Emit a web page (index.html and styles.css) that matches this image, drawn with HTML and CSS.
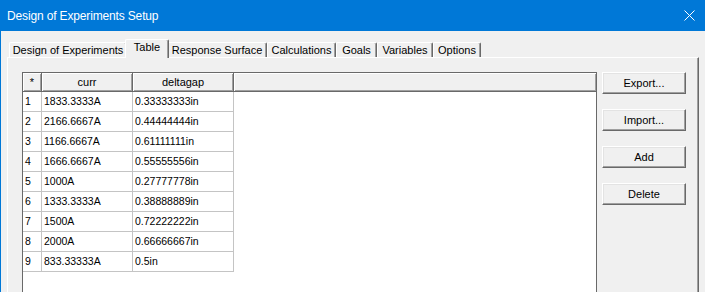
FILE: index.html
```html
<!DOCTYPE html>
<html lang="en">
<head>
    <meta charset="UTF-8">
    <link rel="stylesheet" href="styles.css">
    <title>Design of Experiments Setup</title>
</head>
<body>
    <div class="window">
        <div class="titlebar">
            <span class="title">Design of Experiments Setup</span>
            <svg class="close" width="11" height="11" viewBox="0 0 11 11">
                <path d="M0.5 0.5 L10.5 10.5 M10.5 0.5 L0.5 10.5" stroke="#fff" stroke-width="1" fill="none"/>
            </svg>
        </div>
        <div class="content">
            <div class="tabs">
                <div class="tab tab-doe">Design of Experiments</div>
                <div class="tab tab-table selected">Table</div>
                <div class="tab tab-rs">Response Surface</div>
                <div class="tab tab-calc">Calculations</div>
                <div class="tab tab-goals">Goals</div>
                <div class="tab tab-vars">Variables</div>
                <div class="tab tab-opts">Options</div>
            </div>
            <div class="panel">
                <div class="grid">
                    <div class="head">
                        <div class="hcell col-num">*</div>
                        <div class="hcell col-curr">curr</div>
                        <div class="hcell col-gap">deltagap</div>
                        <div class="hcell col-rest"></div>
                    </div>
                    <div class="row"><div class="cell col-num">1</div><div class="cell col-curr">1833.3333A</div><div class="cell col-gap">0.33333333in</div></div>
                    <div class="row"><div class="cell col-num">2</div><div class="cell col-curr">2166.6667A</div><div class="cell col-gap">0.44444444in</div></div>
                    <div class="row"><div class="cell col-num">3</div><div class="cell col-curr">1166.6667A</div><div class="cell col-gap">0.61111111in</div></div>
                    <div class="row"><div class="cell col-num">4</div><div class="cell col-curr">1666.6667A</div><div class="cell col-gap">0.55555556in</div></div>
                    <div class="row"><div class="cell col-num">5</div><div class="cell col-curr">1000A</div><div class="cell col-gap">0.27777778in</div></div>
                    <div class="row"><div class="cell col-num">6</div><div class="cell col-curr">1333.3333A</div><div class="cell col-gap">0.38888889in</div></div>
                    <div class="row"><div class="cell col-num">7</div><div class="cell col-curr">1500A</div><div class="cell col-gap">0.72222222in</div></div>
                    <div class="row"><div class="cell col-num">8</div><div class="cell col-curr">2000A</div><div class="cell col-gap">0.66666667in</div></div>
                    <div class="row"><div class="cell col-num">9</div><div class="cell col-curr">833.33333A</div><div class="cell col-gap">0.5in</div></div>
                </div>
                <div class="buttons">
                    <button class="btn">Export...</button>
                    <button class="btn">Import...</button>
                    <button class="btn">Add</button>
                    <button class="btn">Delete</button>
                </div>
            </div>
        </div>
    </div>
</body>
</html>
```

FILE: styles.css
```css
body {
    margin: 0;
    padding: 0;
    font-family: 'Liberation Sans', Arial, sans-serif;
    font-size: 11px;
    color: #000;
    background-color: #f0f0f0;
}

.window {
    width: 705px;
    height: 292px;
    overflow: hidden;
    box-sizing: border-box;
    border-left: 1px solid #0078d7;
    background-color: #f0f0f0;
}

.titlebar {
    height: 31px;
    background-color: #0078d7;
    color: #fff;
    display: flex;
    align-items: center;
    padding-left: 6px;
    font-size: 12px;
    letter-spacing: -0.15px;
}

.close {
    margin-left: auto;
    margin-right: 10px;
}

.content {
    padding: 8px 6px 0 6px;
}

.tabs {
    display: flex;
    align-items: flex-end;
    height: 18px;
    padding-left: 2px;
    position: relative;
    z-index: 1;
}

.tab {
    box-sizing: border-box;
    height: 15px;
    line-height: 14px;
    text-align: center;
    white-space: nowrap;
    border-top: 1px solid #fff;
    border-left: 1px solid #fff;
    border-right: 1px solid #696969;
    box-shadow: inset -1px 0 #a0a0a0;
    border-radius: 2px 2px 0 0;
    background-color: #f0f0f0;
}

.tab.selected {
    height: 19px;
    line-height: 15px;
    margin: 0 -2px -1px;
    position: relative;
    z-index: 2;
}

.tab-doe { width: 118px; }
.tab-table { width: 44px; }
.tab-rs { width: 100px; }
.tab-calc { width: 69px; }
.tab-goals { width: 41px; }
.tab-vars { width: 56px; }
.tab-opts { width: 48px; }

.panel {
    display: flex;
    align-items: flex-start;
    height: 240px;
    padding: 14px 0 0 14px;
    border-top: 1px solid #fff;
    border-left: 1px solid #fff;
    border-right: 1px solid #696969;
    box-shadow: inset -1px 0 #a0a0a0;
}

.grid {
    box-sizing: border-box;
    width: 575px;
    height: 240px;
    border: 1px solid #696969;
    background-color: #fff;
}

.head {
    display: flex;
    height: 19px;
}

.hcell {
    box-sizing: border-box;
    height: 19px;
    line-height: 18px;
    text-align: center;
    background-color: #f0f0f0;
    border-right: 1px solid #696969;
    border-bottom: 1px solid #696969;
    box-shadow: inset 1px 1px #fff, inset -1px -1px #a0a0a0;
}

.row {
    display: flex;
    height: 20px;
}

.cell {
    box-sizing: border-box;
    height: 20px;
    line-height: 19px;
    padding-left: 2px;
    font-size: 10.5px;
    white-space: nowrap;
    border-right: 1px solid #c4c4c4;
    border-bottom: 1px solid #c4c4c4;
}

.col-num { width: 19px; }
.col-curr { width: 91px; }
.col-gap { width: 101px; }
.col-rest { flex: 1; border-right: none; }

.buttons {
    display: flex;
    flex-direction: column;
    gap: 15px;
    margin-left: 5px;
}

.btn {
    box-sizing: border-box;
    width: 84px;
    height: 22px;
    padding: 0;
    font-family: 'Liberation Sans', Arial, sans-serif;
    font-size: 11px;
    color: #000;
    background-color: #f0f0f0;
    border: 1px solid;
    border-color: #fff #696969 #696969 #fff;
    box-shadow: inset -1px -1px #a0a0a0, inset 1px 1px #e3e3e3;
    border-radius: 0;
}
```
